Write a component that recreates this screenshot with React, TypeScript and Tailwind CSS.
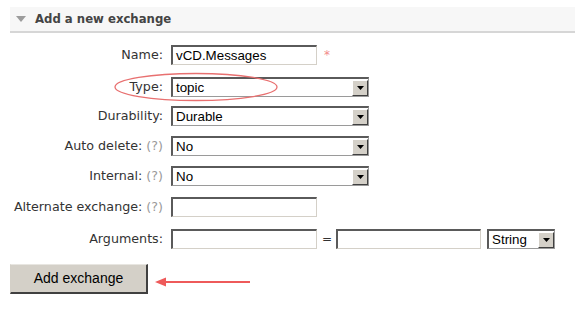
import React from "react";

const labelFont = { fontFamily: '"DejaVu Sans", Verdana, sans-serif' };

function TextBox({ value = "", width = "w-[146px]" }: { value?: string; width?: string }) {
  return (
    <div
      className={`${width} h-[20px] border-t-2 border-l-2 border-b border-r border-t-[#5a5a5a] border-l-[#5a5a5a] border-b-[#d4d0c8] border-r-[#d4d0c8] bg-white pl-[3px] flex items-center text-[13.33px] text-black font-['Liberation_Sans',Arial,sans-serif] leading-none`}
    >
      {value}
    </div>
  );
}

function Select({ value, width = "w-[198px]" }: { value: string; width?: string }) {
  return (
    <div
      className={`${width} h-[20px] border-t-2 border-l-2 border-b border-r border-t-[#5a5a5a] border-l-[#5a5a5a] border-b-[#9a9a9a] border-r-[#9a9a9a] bg-white flex items-center text-[13.33px] text-black font-['Liberation_Sans',Arial,sans-serif] leading-none`}
    >
      <span className="flex-1 pl-[3px]">{value}</span>
      <span className="w-[16px] h-[16px] bg-[#d4d0c8] border-t border-l border-r border-b border-t-white border-l-white border-r-[#404040] border-b-[#404040] flex items-center justify-center">
        <svg width="7" height="4" viewBox="0 0 7 4">
          <polygon points="0,0 7,0 3.5,4" fill="#000" />
        </svg>
      </span>
    </div>
  );
}

function Help() {
  return <span className="text-[#9a9a9a]"> (?)</span>;
}

function Row({ label, children, className = "" }: { label: React.ReactNode; children: React.ReactNode; className?: string }) {
  return (
    <div className={`flex items-center h-[20px] ${className}`}>
      <div className="w-[153px] text-right text-[12.7px] text-[#333] whitespace-nowrap" style={labelFont}>
        {label}
      </div>
      <div className="ml-[8px] flex items-center">{children}</div>
    </div>
  );
}

export default function App() {
  return (
    <div className="relative w-[575px] h-[313px] bg-white overflow-hidden">
      <div className="pt-[7px] pl-[10px]">
        <div className="h-[26px] bg-[#f7f7f7] border-b-2 border-[#d6d6d6] flex items-center pl-[6px]">
          <svg width="10" height="6" viewBox="0 0 10 6" className="mr-[9px]">
            <polygon points="0,0 10,0 5,6" fill="#9c9c9c" />
          </svg>
          <span
            className="text-[13px] font-bold text-[#444]"
            style={{ fontFamily: '"DejaVu Sans Condensed", "DejaVu Sans", Verdana, sans-serif' }}
          >
            Add a new exchange
          </span>
        </div>
      </div>

      <div className="pl-[10px]">
        <Row label="Name:" className="mt-[12px]">
          <TextBox value="vCD.Messages" />
          <span className="ml-[7px] text-[12px] text-[#f28a8a]" style={labelFont}>*</span>
        </Row>
        <Row label="Type:" className="mt-[12px]">
          <Select value="topic" />
        </Row>
        <Row label="Durability:" className="mt-[9px]">
          <Select value="Durable" />
        </Row>
        <Row label={<>Auto delete:<Help /></>} className="mt-[10px]">
          <Select value="No" />
        </Row>
        <Row label={<>Internal:<Help /></>} className="mt-[10px]">
          <Select value="No" />
        </Row>
        <Row label={<>Alternate exchange:<Help /></>} className="mt-[11px]">
          <TextBox />
        </Row>
        <Row label="Arguments:" className="mt-[12px]">
          <TextBox />
          <span className="ml-[5px] mr-[4px] text-[12px] text-[#333]" style={labelFont}>=</span>
          <TextBox width="w-[145px]" />
          <span className="ml-[6px]">
            <Select value="String" width="w-[68px]" />
          </span>
        </Row>

        <div className="mt-[15px] flex items-center">
          <button className="w-[138px] h-[30px] bg-[#d4d0c8] border-t border-l border-r-2 border-b-2 border-t-[#e8e6e1] border-l-[#d4d0c8] border-r-[#404040] border-b-[#404040] text-[14px] text-black font-['Liberation_Sans',Arial,sans-serif]">
            Add exchange
          </button>
        </div>
      </div>

      {/* annotation overlays */}
      <svg className="absolute left-0 top-0 pointer-events-none" width="575" height="313">
        <ellipse cx="196" cy="87" rx="81" ry="13.5" fill="none" stroke="#e87070" strokeWidth="1.3" />
        <line x1="164" y1="282" x2="250" y2="282" stroke="#ee5a5a" strokeWidth="2" />
        <polygon points="155,282 166,277.5 166,286.5" fill="#ee5a5a" />
      </svg>
    </div>
  );
}
